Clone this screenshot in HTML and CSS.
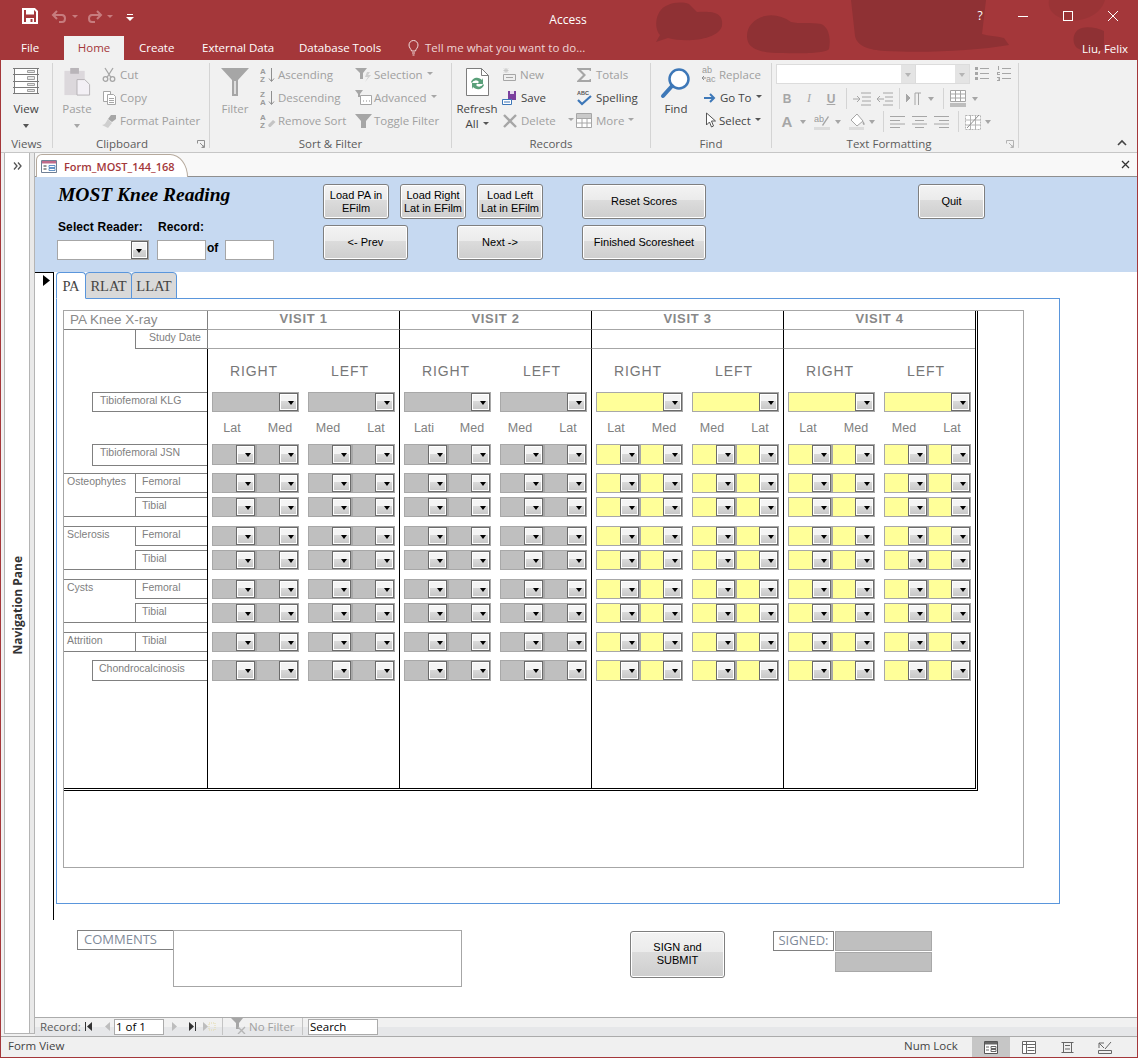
FILE: index.html
```html
<!DOCTYPE html>
<html lang="en">
<head>
<meta charset="utf-8">
<title>Access</title>
<link rel="stylesheet" href="styles.css">
</head>
<body>
<div class="app">
  <header class="chrome">
    <svg class="blobs" width="1138" height="60" viewBox="0 0 1138 60"><g fill="#8f3134"><path d="M668 5c-12 4-15 22-8 30l-4 7 12-4c18 5 50 2 54-12 2-14-10-15-25-14l-8-8c-6-2-14-2-21 1z"/><path d="M765 16c-14 3-22 16-16 28 6 8 20 9 34 9 20 1 44 0 46-4 2-10 0-22-8-25-10-2-22 0-30-2-8-6-18-8-26-6z"/><path d="M851 0l4 36c2 10 14 14 30 15 40 2 90 0 124-6l-5-7c-8-2-16-2-22-4l4-34z"/><path d="M1049 0c-2 10 6 18 20 20 16 2 32-6 36-20z" opacity=".45"/><path d="M1082 28c-9 2-11 14-5 20 8 5 20 4 27 1v-18c-6-3-16-5-22-3z"/></g></svg>
    <div class="titlebar">
      <div class="qat">
        <svg class="q-save" width="16" height="16" viewBox="0 0 16 16"><path d="M1 1h11.500L15 3.500V15H1z" fill="none" stroke="#fff" stroke-width="2"/><path d="M4 2h8v4.500H4zM4 10h8v5H4z" fill="#fff"/><path d="M8.500 11h2v3h-2z" fill="#a4373a"/></svg>
        <svg class="q-undo" width="36" height="16" viewBox="0 0 36 16"><path d="M6 3L2 7l4 4M2.500 7H11c4 0 4 7 0 7H8" fill="none" stroke="#c77c7e" stroke-width="2"/><path d="M21 7h6l-3 3z" fill="#c77c7e"/></svg>
        <svg class="q-redo" width="36" height="16" viewBox="0 0 36 16"><path d="M11 3l4 4-4 4M14.500 7H6c-4 0-4 7 0 7h3" fill="none" stroke="#c77c7e" stroke-width="2"/><path d="M21 7h6l-3 3z" fill="#c77c7e"/></svg>
        <svg class="q-more" width="8" height="8" viewBox="0 0 8 8"><path d="M1 1h6v1H1zM0 4h8L4 8z" fill="#fff"/></svg>
      </div>
      <div class="app-name">Access</div>
      <div class="winbtns">
        <span class="help">?</span>
        <svg width="12" height="12" viewBox="0 0 12 12"><path d="M1 6.500h10" stroke="#fff"/></svg>
        <svg width="12" height="12" viewBox="0 0 12 12"><rect x="1.500" y="1.500" width="9" height="9" fill="none" stroke="#fff"/></svg>
        <svg width="12" height="12" viewBox="0 0 12 12"><path d="M1 1l10 10M11 1L1 11" stroke="#fff"/></svg>
      </div>
    </div>
    <nav class="menutabs">
      <span class="mt mt-file">File</span>
      <span class="mt mt-home">Home</span>
      <span class="mt mt-create">Create</span>
      <span class="mt mt-ext">External Data</span>
      <span class="mt mt-db">Database Tools</span>
      <svg class="bulb" width="11" height="16" viewBox="0 0 11 16"><path d="M3.500 11C3 8.500 1 8 1 5a4.500 4.500 0 0 1 9 0c0 3-2 3.500-2.500 6zM4 13h3M4.500 15h2" fill="none" stroke="#f0dcdc"/></svg>
      <span class="tellme">Tell me what you want to do...</span>
      <span class="user">Liu, Felix</span>
    </nav>
  </header>

  <section class="ribbon">
    <div class="group g-views">
      <div class="gbody">
        <div class="big w50">
          <svg class="bicon" width="26" height="30" viewBox="0 0 26 30"><path d="M1.500 1.500h23v25h-23z" fill="#fff" stroke="#7a7a7a"/><path d="M0 1.500h26M0 7.500h26M0 14.500h26M0 20.500h26M0 26.500h26" stroke="#7a7a7a" fill="none"/><path d="M14.500 3.500h7v2h-7zM14.500 9.500h7v3h-7zM14.500 16.500h7v2h-7zM14.500 22.500h7v2h-7z" fill="#e8e8e8" stroke="#a0a0a0"/></svg>
          <span class="bl dark">View</span>
          <i class="darr dk"></i>
        </div>
      </div>
      <div class="glabel">Views</div>
    </div>

    <div class="group g-clip">
      <div class="gbody">
        <div class="big w32">
          <svg class="bicon" width="28" height="31" viewBox="0 0 28 31"><path d="M1 4h21v25H1z" fill="#dcd8dc"/><path d="M7 1h9v6H7z" fill="#b9b5b9"/><path d="M14 13h8l5 5v11H14z" fill="#f3f0f5" stroke="#b5b2b5"/></svg>
          <span class="bl">Paste</span>
          <i class="darr"></i>
        </div>
        <div class="smcol c-clip">
          <div class="si"><svg width="14" height="15" viewBox="0 0 14 15"><g fill="none" stroke="#a6a6a6" stroke-width="1.300"><circle cx="3.500" cy="12" r="2.300"/><circle cx="10.500" cy="12" r="2.300"/><path d="M3 1l6 9.500M11 1L5 10.500"/></g></svg><span>Cut</span></div>
          <div class="si"><svg width="15" height="15" viewBox="0 0 15 15"><g fill="#fff" stroke="#a6a6a6"><path d="M1.500 1.500h7v10h-7z"/><path d="M5.500 4.500h6l2 2v8h-8z"/></g><path d="M7 8.500h5M7 10.500h5M7 12.500h5" stroke="#a6a6a6"/></svg><span>Copy</span></div>
          <div class="si"><svg width="16" height="14" viewBox="0 0 16 14"><path d="M9 1l5 0v4L10 8 6 5z" fill="#a6a6a6"/><path d="M6 5l4 4-4 5-6-3c3 0 4-3 6-6z" fill="#cfcfcf"/></svg><span>Format Painter</span></div>
        </div>
      </div>
      <div class="glabel lp"><span>Clipboard</span><svg class="launch" width="8" height="8" viewBox="0 0 8 8"><path d="M.500 3.500v-3h7v7h-3M3 3l4 4M5 7h2V5" fill="none" stroke="#8f8f8f"/></svg></div>
    </div>

    <div class="group g-sort">
      <div class="gbody">
        <div class="big w50">
          <svg class="bicon" width="28" height="28" viewBox="0 0 28 28"><path d="M0 0h28L17 12v16h-6V12z" fill="#a6a6a6"/><path d="M13 13h2v13h-2z" fill="#dedede"/></svg>
          <span class="bl">Filter</span>
        </div>
        <div class="smcol c-sort1">
          <div class="si"><svg width="16" height="16" viewBox="0 0 16 16"><text class="az" x="0" y="7">A</text><text class="az" x="0" y="15">Z</text><path d="M11.500 1v13M9 11.500l2.500 3 2.500-3" fill="none" stroke="#8f8f8f"/></svg><span>Ascending</span></div>
          <div class="si"><svg width="16" height="16" viewBox="0 0 16 16"><text class="az" x="0" y="7">Z</text><text class="az" x="0" y="15">A</text><path d="M11.500 1v13M9 11.500l2.500 3 2.500-3" fill="none" stroke="#8f8f8f"/></svg><span>Descending</span></div>
          <div class="si"><svg width="16" height="16" viewBox="0 0 16 16"><text class="az" x="0" y="7">A</text><text class="az" x="0" y="15">Z</text><path d="M8 12l5-5 2.500 2-5 5H9z" fill="#c4c4c4"/></svg><span>Remove Sort</span></div>
        </div>
        <div class="smcol c-sort2">
          <div class="si"><svg width="17" height="16" viewBox="0 0 17 16"><path d="M0 1h12L8 6v6H5V6z" fill="#a6a6a6"/><path d="M12 5l-2 5h3l-3 5 6-7h-3l2-3z" fill="#cfcfcf"/></svg><span>Selection</span><i class="darr in"></i></div>
          <div class="si"><svg width="17" height="16" viewBox="0 0 17 16"><path d="M0 0h8L5 4v3H3V4z" fill="#a6a6a6"/><path d="M5.500 5.500h11v9h-11z" fill="#fff" stroke="#a6a6a6"/><path d="M8 11h1M11 11h1M14 11h1" stroke="#8f8f8f"/></svg><span>Advanced</span><i class="darr in"></i></div>
          <div class="si"><svg width="17" height="16" viewBox="0 0 17 16"><path d="M0 1h17l-6 7v7H6V8z" fill="#a6a6a6"/></svg><span>Toggle Filter</span></div>
        </div>
      </div>
      <div class="glabel">Sort &amp; Filter</div>
    </div>

    <div class="group g-rec">
      <div class="gbody">
        <div class="big w50">
          <svg class="bicon" width="25" height="30" viewBox="0 0 25 30"><path d="M1.500 1.500h15l7 7v20h-22z" fill="#fff" stroke="#7d7d7d"/><path d="M16.500 1.500v7h7" fill="none" stroke="#7d7d7d"/><path d="M6 15a6.500 6.500 0 0 1 11-2l1-2v6h-6l2-2a4 4 0 0 0-7 1z" fill="#5aa07a"/><path d="M19 18a6.500 6.500 0 0 1-11 2l-1 2v-6h6l-2 2a4 4 0 0 0 7-1z" fill="#5aa07a"/></svg>
          <span class="bl dark">Refresh</span>
          <span class="bl dark all">All<i class="darr in dk"></i></span>
        </div>
        <div class="smcol c-rec1">
          <div class="si"><svg width="15" height="15" viewBox="0 0 15 15"><path d="M1.500 7.500h12v6h-12z" fill="#efefef" stroke="#a6a6a6"/><path d="M4 10.500h7" stroke="#a6a6a6"/><path d="M4 1v5M1.500 3.500h5M2 1.500l4 4M6 1.500l-4 4" stroke="#c9c9c9"/></svg><span>New</span></div>
          <div class="si on"><svg width="16" height="16" viewBox="0 0 16 16"><path d="M6 1h8v9H6z" fill="#7b3f9e"/><path d="M8 1h4v3H8z" fill="#e6dcef"/><path d="M.500 9.500h9v5h-9z" fill="#fff" stroke="#3d77b8"/><path d="M2 12h6" stroke="#3d77b8"/></svg><span>Save</span></div>
          <div class="si"><svg width="16" height="16" viewBox="0 0 16 16"><path d="M2 2l12 12M14 2L2 14" stroke="#a6a6a6" stroke-width="2.400"/></svg><span>Delete</span><i class="darr in far"></i></div>
        </div>
        <div class="smcol c-rec2">
          <div class="si"><svg width="16" height="16" viewBox="0 0 16 16"><path d="M1 1h14v3h-1l-1-1H5l5 5-5 5h8l1-1h1v3H1v-1l6-6-6-6z" fill="#a6a6a6"/></svg><span>Totals</span></div>
          <div class="si on"><svg width="17" height="17" viewBox="0 0 17 17"><text class="abc" x="1" y="6">ABC</text><path d="M2 11l4 4 9-8" fill="none" stroke="#3d77b8" stroke-width="2.200"/></svg><span>Spelling</span></div>
          <div class="si"><svg width="16" height="15" viewBox="0 0 16 15"><path d="M.500.500h15v14H.500z" fill="#fff" stroke="#a6a6a6"/><path d="M0 5.500h16M0 10h16M6 5v10M11 5v10" stroke="#a6a6a6"/><path d="M1 1h14v4H1z" fill="#c9c9c9"/></svg><span>More</span><i class="darr in"></i></div>
        </div>
      </div>
      <div class="glabel">Records</div>
    </div>

    <div class="group g-find">
      <div class="gbody">
        <div class="big w50">
          <svg class="bicon" width="30" height="33" viewBox="0 0 30 33"><circle cx="18" cy="12" r="9.500" fill="#fff" stroke="#3e78b8" stroke-width="2.500"/><path d="M11 19L2 29" stroke="#3e78b8" stroke-width="4" stroke-linecap="round"/></svg>
          <span class="bl dark">Find</span>
        </div>
        <div class="smcol c-find">
          <div class="si"><svg width="17" height="17" viewBox="0 0 17 17"><text class="rep" x="1" y="7">ab</text><text class="rep" x="5" y="16">ac</text><path d="M1 12h4M1 12l2-2M1 12l2 2" stroke="#8f8f8f" fill="none"/></svg><span>Replace</span></div>
          <div class="si on"><svg width="15" height="12" viewBox="0 0 15 12"><path d="M2 6h10M8 2l4 4-4 4" fill="none" stroke="#3e78b8" stroke-width="2"/></svg><span>Go To</span><i class="darr in dk"></i></div>
          <div class="si on"><svg width="16" height="17" viewBox="0 0 16 17"><path d="M4.500 1v12l3-3 2 5 2-1-2-5h4z" fill="#fff" stroke="#555"/></svg><span>Select</span><i class="darr in dk"></i></div>
        </div>
      </div>
      <div class="glabel">Find</div>
    </div>

    <div class="group g-text">
      <div class="gbody tf">
        <div class="tfrow tf1">
          <div class="fbox fname"><i class="fdrop"></i></div>
          <div class="fbox fsize"><i class="fdrop"></i></div>
          <svg class="ti-b" width="16" height="16" viewBox="0 0 16 16"><path d="M6 3.500h9M6 8.500h9M6 13.500h9" stroke="#a6a6a6"/><path d="M1 2h3v3H1zM1 7h3v3H1zM1 12h3v3H1z" fill="#a6a6a6"/></svg>
          <svg class="ti-n" width="16" height="16" viewBox="0 0 16 16"><path d="M6 3.500h9M6 8.500h9M6 13.500h9" stroke="#a6a6a6"/><path d="M2 1h1v4H2zM1 7h3v1H2v1h2v1H1zM1 12h3v4H1v-1h2v-.500H2v-1h1V13H1z" fill="#a6a6a6"/></svg>
        </div>
        <div class="tfrow tf2">
          <span class="tg b">B</span><span class="tg i">I</span><span class="tg u">U</span><i class="sp sp1"></i>
          <svg class="m6" width="18" height="14" viewBox="0 0 18 14"><path d="M0 7h6M4 4l3 3-3 3M8 1h10M9 5h9M9 9h9M8 13h10" fill="none" stroke="#a6a6a6"/></svg>
          <svg class="m6" width="16" height="14" viewBox="0 0 16 14"><path d="M7 7H1M3 4L0 7l3 3M6 1h10M8 5h8M8 9h8M6 13h10" fill="none" stroke="#a6a6a6"/></svg>
          <i class="sp m6"></i>
          <svg class="m6" width="16" height="14" viewBox="0 0 16 14"><path d="M0 2l4 4-4 4zM9 1h6M12.500 1v12M9 1v12" stroke="#a6a6a6" fill="#a6a6a6"/></svg>
          <i class="darr cell18"></i><i class="sp m3"></i>
          <svg class="m6" width="16" height="17" viewBox="0 0 16 17"><path d="M.500.500h15v11H.500z" fill="#fff" stroke="#a6a6a6"/><path d="M0 4h16M0 8h16M5.500 0v12M10.500 0v12" stroke="#a6a6a6"/><path d="M0 13h16v4H0z" fill="#bdbdbd"/></svg>
          <i class="darr cell18"></i>
        </div>
        <div class="tfrow tf3">
          <span class="tg a">A</span><i class="darr cell10"></i>
          <svg class="m6" width="16" height="17" viewBox="0 0 16 17"><text class="rep" x="0" y="9">ab</text><path d="M8 12l6-9 1 1-6 9z" fill="#a6a6a6"/><path d="M0 14h16v3H0z" fill="#dcdcdc"/></svg>
          <i class="darr cell16"></i>
          <svg class="m2" width="18" height="17" viewBox="0 0 18 17"><path d="M3 7l6-6 6 7-6 5z" fill="#fff" stroke="#a6a6a6"/><path d="M15 8c2 2 2 4 1 4s-2-2-1-4z" fill="#a6a6a6"/><path d="M1 14h15v3H1z" fill="#dcdcdc"/></svg>
          <i class="darr cell12"></i><i class="sp m5"></i>
          <svg class="m6" width="15" height="12" viewBox="0 0 15 12"><path d="M0 .5h15M0 4.500h10M0 8h15M0 11.500h10" stroke="#a6a6a6"/></svg>
          <svg class="m7" width="15" height="12" viewBox="0 0 15 12"><path d="M0 .5h15M3 4.500h9M0 8h15M3 11.500h9" stroke="#a6a6a6"/></svg>
          <svg class="m7" width="15" height="12" viewBox="0 0 15 12"><path d="M0 .5h15M5 4.500h10M0 8h15M5 11.500h10" stroke="#a6a6a6"/></svg>
          <i class="sp m9"></i>
          <svg class="m6" width="16" height="17" viewBox="0 0 16 17"><path d="M.500 2.500h15v14H.500z" fill="#fff" stroke="#b5b5b5" stroke-dasharray="2 1"/><path d="M0 7h16M0 12h16M5.500 2v15M10.500 2v15" stroke="#b5b5b5"/><path d="M2 15L14 2" stroke="#8f8f8f"/></svg>
          <i class="darr cell14"></i>
        </div>
      </div>
      <div class="glabel lp"><span>Text Formatting</span><svg class="launch" width="8" height="8" viewBox="0 0 8 8"><path d="M.500 3.500v-3h7v7h-3M3 3l4 4M5 7h2V5" fill="none" stroke="#b3b3b3"/></svg></div>
    </div>
    <div class="ribbon-end">
      <svg width="10" height="7" viewBox="0 0 10 7"><path d="M1 6l4-4 4 4" fill="none" stroke="#444" stroke-width="1.600"/></svg>
    </div>
  </section>

  <div class="workspace">
    <aside class="navpane">
      <div class="nav-top"><svg width="9" height="8" viewBox="0 0 9 8"><path d="M1 .5l3 3.500-3 3.500M5 .5l3 3.500-3 3.500" fill="none" stroke="#555" stroke-width="1.300"/></svg></div>
      <div class="nav-label"><span>Navigation Pane</span></div>
    </aside>
    <div class="splitter"></div>

    <main class="doc">
      <div class="doctabs">
        <div class="dtab">
          <svg width="16" height="13" viewBox="0 0 16 13"><path d="M.500.500h15v12H.500z" fill="#fff" stroke="#6f7f95"/><path d="M1 1h14v2.500H1z" fill="#c06a8a"/><path d="M2.500 6h3M2.500 9h3" stroke="#333"/><path d="M8 5.500h6v2H8zM8 8.500h6v2H8z" fill="#fff" stroke="#3e78b8" stroke-width=".8"/></svg>
          <span>Form_MOST_144_168</span>
        </div>
        <svg class="doc-x" width="9" height="9" viewBox="0 0 9 9"><path d="M1 1l7 7M8 1L1 8" stroke="#333" stroke-width="1.300"/></svg>
      </div>

      <form class="form">
        <div class="fhead">
          <div class="fhead-left">
            <h1 class="ftitle">MOST Knee Reading</h1>
            <div class="flabels"><span class="fl1">Select Reader:</span><span>Record:</span></div>
            <div class="finputs">
              <div class="box b-reader"><i class="cb"></i></div>
              <div class="box b-rec"></div>
              <span class="of">of</span>
              <div class="box b-rec"></div>
            </div>
          </div>
          <div class="btnset b220">
            <div class="btnrow">
              <button type="button" class="btn w66">Load PA in<br>EFilm</button>
              <button type="button" class="btn w66">Load Right<br>Lat in EFilm</button>
              <button type="button" class="btn w66">Load Left<br>Lat in EFilm</button>
            </div>
            <div class="btnrow">
              <button type="button" class="btn w85">&lt;- Prev</button>
              <button type="button" class="btn w86">Next -&gt;</button>
            </div>
          </div>
          <div class="btnset b124">
            <button type="button" class="btn wfull">Reset Scores</button>
            <button type="button" class="btn wfull">Finished Scoresheet</button>
          </div>
          <div class="btnset bquit">
            <button type="button" class="btn wfull">Quit</button>
          </div>
        </div>

        <div class="detail">
          <div class="selector"><svg width="7" height="11" viewBox="0 0 7 11"><path d="M0 0l7 5.500L0 11z" fill="#000"/></svg></div>
          <div class="tabctl">
            <div class="tabstrip">
              <span class="tb tb-on">PA</span><span class="tb tb-r">RLAT</span><span class="tb tb-l">LLAT</span>
            </div>
            <div class="panel">
              <div class="outer">
                <div class="sheet">
                  <div class="row r-head">
                    <div class="lab l-title">PA Knee X-ray</div>
                    <div class="v vh first">VISIT 1</div><div class="v vh">VISIT 2</div><div class="v vh">VISIT 3</div><div class="v vh">VISIT 4</div>
                  </div>
                  <div class="row r-date">
                    <div class="lab l-date"><span>Study Date</span></div>
                    <div class="v vd first"></div><div class="v vd"></div><div class="v vd"></div><div class="v vd"></div>
                  </div>
                  <div class="row r-side">
                    <div class="lab"></div>
                    <div class="v side"><span>RIGHT</span><span>LEFT</span></div><div class="v side"><span>RIGHT</span><span>LEFT</span></div><div class="v side"><span>RIGHT</span><span>LEFT</span></div><div class="v side"><span>RIGHT</span><span>LEFT</span></div>
                  </div>
                  <div class="row r20">
                    <div class="lab l-wide"><span>Tibiofemoral KLG</span></div>
                    <div class="v g"><i class="c w"></i><i class="c w"></i></div><div class="v g"><i class="c w"></i><i class="c w"></i></div><div class="v y"><i class="c w"></i><i class="c w"></i></div><div class="v y"><i class="c w"></i><i class="c w"></i></div>
                  </div>
                  <div class="row r-sub">
                    <div class="lab"></div>
                    <div class="v sub"><span>Lat</span><span>Med</span><span>Med</span><span>Lat</span></div><div class="v sub"><span>Lati</span><span>Med</span><span>Med</span><span>Lat</span></div><div class="v sub"><span>Lat</span><span>Med</span><span>Med</span><span>Lat</span></div><div class="v sub"><span>Lat</span><span>Med</span><span>Med</span><span>Lat</span></div>
                  </div>
                  <div class="row r29 tall">
                    <div class="lab l-wide"><span>Tibiofemoral JSN</span></div>
                    <div class="v g"><i class="c"></i><i class="c"></i><i class="c"></i><i class="c"></i></div><div class="v g"><i class="c"></i><i class="c"></i><i class="c"></i><i class="c"></i></div><div class="v y"><i class="c"></i><i class="c"></i><i class="c"></i><i class="c"></i></div><div class="v y"><i class="c"></i><i class="c"></i><i class="c"></i><i class="c"></i></div>
                  </div>
                  <div class="row r24">
                    <div class="lab l-pair l-open"><span class="pn">Osteophytes</span><span class="pc">Femoral</span></div>
                    <div class="v g"><i class="c"></i><i class="c"></i><i class="c"></i><i class="c"></i></div><div class="v g"><i class="c"></i><i class="c"></i><i class="c"></i><i class="c"></i></div><div class="v y"><i class="c"></i><i class="c"></i><i class="c"></i><i class="c"></i></div><div class="v y"><i class="c"></i><i class="c"></i><i class="c"></i><i class="c"></i></div>
                  </div>
                  <div class="row r29">
                    <div class="lab l-pair l-close"><span class="pn"></span><span class="pc">Tibial</span></div>
                    <div class="v g"><i class="c"></i><i class="c"></i><i class="c"></i><i class="c"></i></div><div class="v g"><i class="c"></i><i class="c"></i><i class="c"></i><i class="c"></i></div><div class="v y"><i class="c"></i><i class="c"></i><i class="c"></i><i class="c"></i></div><div class="v y"><i class="c"></i><i class="c"></i><i class="c"></i><i class="c"></i></div>
                  </div>
                  <div class="row r24">
                    <div class="lab l-pair l-open"><span class="pn">Sclerosis</span><span class="pc">Femoral</span></div>
                    <div class="v g"><i class="c"></i><i class="c"></i><i class="c"></i><i class="c"></i></div><div class="v g"><i class="c"></i><i class="c"></i><i class="c"></i><i class="c"></i></div><div class="v y"><i class="c"></i><i class="c"></i><i class="c"></i><i class="c"></i></div><div class="v y"><i class="c"></i><i class="c"></i><i class="c"></i><i class="c"></i></div>
                  </div>
                  <div class="row r29">
                    <div class="lab l-pair l-close"><span class="pn"></span><span class="pc">Tibial</span></div>
                    <div class="v g"><i class="c"></i><i class="c"></i><i class="c"></i><i class="c"></i></div><div class="v g"><i class="c"></i><i class="c"></i><i class="c"></i><i class="c"></i></div><div class="v y"><i class="c"></i><i class="c"></i><i class="c"></i><i class="c"></i></div><div class="v y"><i class="c"></i><i class="c"></i><i class="c"></i><i class="c"></i></div>
                  </div>
                  <div class="row r24">
                    <div class="lab l-pair l-open"><span class="pn">Cysts</span><span class="pc">Femoral</span></div>
                    <div class="v g"><i class="c"></i><i class="c"></i><i class="c"></i><i class="c"></i></div><div class="v g"><i class="c"></i><i class="c"></i><i class="c"></i><i class="c"></i></div><div class="v y"><i class="c"></i><i class="c"></i><i class="c"></i><i class="c"></i></div><div class="v y"><i class="c"></i><i class="c"></i><i class="c"></i><i class="c"></i></div>
                  </div>
                  <div class="row r29">
                    <div class="lab l-pair l-close"><span class="pn"></span><span class="pc">Tibial</span></div>
                    <div class="v g"><i class="c"></i><i class="c"></i><i class="c"></i><i class="c"></i></div><div class="v g"><i class="c"></i><i class="c"></i><i class="c"></i><i class="c"></i></div><div class="v y"><i class="c"></i><i class="c"></i><i class="c"></i><i class="c"></i></div><div class="v y"><i class="c"></i><i class="c"></i><i class="c"></i><i class="c"></i></div>
                  </div>
                  <div class="row r28">
                    <div class="lab l-pair l-open l-close"><span class="pn">Attrition</span><span class="pc">Tibial</span></div>
                    <div class="v g"><i class="c"></i><i class="c"></i><i class="c"></i><i class="c"></i></div><div class="v g"><i class="c"></i><i class="c"></i><i class="c"></i><i class="c"></i></div><div class="v y"><i class="c"></i><i class="c"></i><i class="c"></i><i class="c"></i></div><div class="v y"><i class="c"></i><i class="c"></i><i class="c"></i><i class="c"></i></div>
                  </div>
                  <div class="row r-last tall">
                    <div class="lab l-wide l-chon"><span>Chondrocalcinosis</span></div>
                    <div class="v g"><i class="c"></i><i class="c"></i><i class="c"></i><i class="c"></i></div><div class="v g"><i class="c"></i><i class="c"></i><i class="c"></i><i class="c"></i></div><div class="v y"><i class="c"></i><i class="c"></i><i class="c"></i><i class="c"></i></div><div class="v y"><i class="c"></i><i class="c"></i><i class="c"></i><i class="c"></i></div>
                  </div>
                </div>
              </div>
            </div>
          </div>
        </div>

        <div class="ffoot">
          <div class="comments"><span class="caption c-comments">COMMENTS</span><div class="memo"></div></div>
          <button type="button" class="btn sign">SIGN and<br>SUBMIT</button>
          <div class="signed">
            <span class="caption c-signed">SIGNED:</span>
            <div class="sigboxes"><div class="sigbox"></div><div class="sigbox"></div></div>
          </div>
        </div>
      </form>

      <div class="recbar">
        <span class="rb-lab">Record:</span>
        <svg class="rb1" width="8" height="9" viewBox="0 0 8 9"><path d="M0 0h1v9H0zM7 0v9L2 4.500z" fill="#333"/></svg>
        <svg class="rb2" width="6" height="9" viewBox="0 0 6 9"><path d="M5 0v9L0 4.500z" fill="#bdbdbd"/></svg>
        <div class="rb-input">1 of 1</div>
        <svg class="rb3" width="6" height="9" viewBox="0 0 6 9"><path d="M0 0v9l5-4.500z" fill="#bdbdbd"/></svg>
        <svg class="rb4" width="8" height="9" viewBox="0 0 8 9"><path d="M0 0v9l5-4.500zM6 0h1v9H6z" fill="#333"/></svg>
        <svg class="rb5" width="13" height="9" viewBox="0 0 13 9"><path d="M0 0v9l5-4.500z" fill="#bdbdbd"/><path d="M6 1h6v7H6z" fill="none" stroke="#e3d9a8" stroke-dasharray="1 1"/></svg>
        <i class="rb-sep rb-s1"></i>
        <svg class="rb-filter" width="16" height="16" viewBox="0 0 16 16"><path d="M0 0h12L8 5v6H5V5z" fill="#a6a6a6"/><path d="M7 9l7 7M14 9l-7 7" stroke="#b5b5b5" stroke-width="1.400"/></svg>
        <span class="rb-nof">No Filter</span>
        <i class="rb-sep rb-s2"></i>
        <div class="rb-search">Search</div>
      </div>
    </main>
  </div>

  <footer class="status">
    <span class="st-left">Form View</span>
    <span class="st-num">Num Lock</span>
    <div class="views">
      <span class="vw vw-on"><svg width="14" height="13" viewBox="0 0 14 13"><path d="M.500.500h13v12H.500z" fill="#fff" stroke="#555"/><path d="M1 1h12v2.500H1z" fill="#666"/><path d="M2 6h3M2 9h3M7 5.500h5v2H7zM7 8.500h5v2H7z" stroke="#666" fill="none"/></svg></span>
      <span class="vw"><svg width="14" height="13" viewBox="0 0 14 13"><path d="M.500.500h13v12H.500zM.5 3.500h13M4.500 1v12M5.500 6.500h7M5.500 9.500h7" fill="#fff" stroke="#666"/></svg></span>
      <span class="vw"><svg width="13" height="13" viewBox="0 0 13 13"><path d="M.5 1.500h12M.5 11.500h12M2.500 1.500v10h8v-10M4 4.500h5M4 8h5" fill="none" stroke="#666"/></svg></span>
      <span class="vw"><svg width="14" height="13" viewBox="0 0 14 13"><path d="M.5 9.500h13v3H.5zM1 2l5 5M1 7V2h5M7 8l6-7" fill="none" stroke="#666"/></svg></span>
    </div>
  </footer>
</div>
</body>
</html>
```

FILE: styles.css
```css
* { box-sizing: border-box; }
html, body { margin: 0; height: 100%; overflow: hidden; }
body { font-family: "Open Sans", "Noto Sans", sans-serif; font-size: 11.5px; color: #444; background: #fff; }

.app { width: 1138px; height: 1058px; display: flex; flex-direction: column; border: 1px solid #a4373a; border-top: 0; }

/* ---------- title bar and menu tabs ---------- */
.chrome { position: relative; height: 60px; margin: 0 -1px; background: #a4373a; flex: none; color: #fff; }
.blobs { position: absolute; left: 0; top: 0; }
.titlebar { position: relative; height: 36px; display: flex; }
.qat { display: flex; align-items: flex-start; padding: 8px 0 0 22px; width: 540px; }
.q-undo { margin-left: 13px; }
.q-redo { margin-left: -1px; }
.q-more { margin: 5px 0 0 4px; }
.app-name { width: 56px; text-align: center; font-size: 12px; padding-top: 11px; }
.winbtns { display: flex; align-items: flex-start; margin-left: 378px; padding-top: 10px; }
.help { width: 12px; font-size: 12px; line-height: 14px; text-align: center; margin-top: -1px; }
.winbtns svg { margin-left: 33px; }
.winbtns svg:nth-child(2) { margin-left: 31px; }

.menutabs { position: relative; height: 24px; display: flex; align-items: center; font-size: 11.5px; }
.mt { line-height: 24px; white-space: nowrap; }
.mt-file { margin-left: 21px; width: 43px; }
.mt-home { width: 60px; height: 24px; background: #f1f1f1; color: #a4373a; text-align: center; }
.mt-create { margin-left: 15px; width: 63px; }
.mt-ext { width: 97px; }
.mt-db { width: 109px; }
.bulb { margin-right: 6px; }
.tellme { width: 657px; color: #eed5d5; margin-top: -1px; }
.user { white-space: nowrap; }

/* ---------- ribbon ---------- */
.ribbon { height: 93px; flex: none; display: flex; background: #f1f1f1; border-bottom: 1px solid #c6c6c6; padding: 3px 0 0; color: #a0a0a0; }
.group { display: flex; flex-direction: column; height: 85px; border-right: 1px solid #d4d4d4; }
.gbody { display: flex; height: 75px; flex: none; }
.glabel { height: 12px; line-height: 12px; flex: none; text-align: center; color: #5c5c5c; font-size: 11.5px; }
.glabel.lp { display: flex; align-items: center; }
.glabel.lp span { flex: 1; }
.launch { margin-right: 4px; }
.g-views { width: 52px; }
.g-clip { width: 157px; }
.g-clip .lp span { margin-right: 6px; }
.g-sort { width: 242px; }
.g-rec { width: 199px; }
.g-find { width: 121px; }
.g-text { width: 247px; }
.ribbon-end { flex: 1; display: flex; align-items: flex-end; justify-content: flex-end; padding: 0 10px 6px 0; }

.big { display: flex; flex-direction: column; align-items: center; height: 73px; }
.w50 { width: 50px; }
.w32 { width: 32px; margin-left: 8px; }
.bicon { height: 38px; padding-top: 4px; flex: none; overflow: visible; }
.g-views .bicon, .g-clip .bicon, .g-sort .bicon, .g-rec .bicon { height: 34px; }
.g-find .bicon { height: 37px; }
.bl { line-height: 15px; white-space: nowrap; margin-top: 4px; }
.g-find .bl { margin-top: 1px; }
.bl.all { margin-top: 0; }
.dark { color: #444; }
.darr { display: block; width: 0; height: 0; margin: 8px auto 0; border: 3px solid transparent; border-top: 4px solid #a6a6a6; border-bottom: 0; }
.darr.dk { border-top-color: #555; }
.darr.in { display: inline-block; margin: 0 0 2px 4px; border-width: 3px 3px 0; vertical-align: middle; flex: none; }
.darr.far { margin-left: 12px; }
.tf .darr { margin-top: 0; flex: none; }
.tf .cell18 { margin-left: 6px; margin-right: 6px; }
.tf .cell10 { margin-left: 2px; margin-right: 2px; }
.tf .cell16 { margin-left: 5px; margin-right: 5px; }
.tf .cell12 { margin-left: 3px; margin-right: 3px; }
.tf .cell14 { margin-left: 4px; margin-right: 4px; }

.smcol { display: flex; flex-direction: column; }
.si { height: 23px; display: flex; align-items: center; white-space: nowrap; }
.si > svg { flex: none; }
.si.on { color: #444; }
.c-clip { margin-left: 9px; }
.c-clip .si > svg { margin-right: 4px; }
.c-clip .si:nth-child(2) > svg { margin-right: 3px; }
.c-clip .si:nth-child(3) > svg { margin-right: 2px; }
.c-sort1 { width: 95px; }
.c-sort1 .si > svg { margin-right: 2px; }
.c-sort2 .si > svg { margin-right: 2px; }
.c-rec1 { width: 74px; }
.c-rec1 .si > svg { margin-right: 3px; }
.c-rec2 .si > svg { margin-right: 4px; }
.c-rec2 .si:nth-child(2) > svg { margin-right: 3px; }
.c-find .si > svg { margin-right: 1px; }
.c-find .si:nth-child(2) > svg { margin-right: 3px; margin-left: 1px; }
.c-find .si:nth-child(3) > svg { margin-right: 1px; margin-left: 1px; }

.az { font: 700 8px "Liberation Sans", sans-serif; fill: #9a9a9a; }
.abc { font: 700 5.500px "Liberation Sans", sans-serif; fill: #555; }
.rep { font: 9px "Liberation Sans", sans-serif; fill: #9a9a9a; }

.tf { display: block; padding-left: 4px; }
.tfrow { display: flex; align-items: center; height: 23px; }
.tf1 { align-items: flex-start; height: 24px; padding-top: 1px; }
.fbox { background: #fff; border: 1px solid #dcdcdc; height: 20px; display: flex; justify-content: flex-end; }
.fname { width: 139px; border-right: 0; }
.fsize { width: 55px; }
.fdrop { display: block; width: 14px; background: #e4e4e4; position: relative; }
.fdrop::after { content: ""; position: absolute; left: 4px; top: 8px; border: 3px solid transparent; border-top: 4px solid #b5b5b5; border-bottom: 0; }
.ti-b { margin-left: 4px; margin-top: 1px; }
.ti-n { margin-left: 6px; margin-top: 1px; }
.tg { width: 22px; text-align: center; flex: none; font: 700 12px "Liberation Sans", sans-serif; color: #a6a6a6; }
.tg.i { font: italic 12px "Liberation Serif", serif; }
.tg.u { text-decoration: underline; }
.tg.a { font-size: 15px; }
.sp { display: block; width: 1px; height: 21px; background: #d4d4d4; flex: none; }
.sp1 { margin-left: 4px; }
.m2 { margin-left: 2px; }
.m3 { margin-left: 3px; }
.m5 { margin-left: 5px; }
.m6 { margin-left: 6px; }
.m7 { margin-left: 7px; }
.m9 { margin-left: 9px; }
.tf svg { flex: none; }

/* ---------- workspace ---------- */
.workspace { flex: 1; display: flex; min-height: 0; background: #f1f1f1; }
.navpane { width: 25px; margin: 0 0 2px 3px; display: flex; flex-direction: column; background: #fff; border-left: 1px solid #b4b4b4; border-bottom: 1px solid #b4b4b4; }
.nav-top { height: 24px; display: flex; align-items: flex-start; justify-content: center; padding: 9px 0 0; }
.nav-label { flex: 1; display: flex; align-items: center; justify-content: center; }
.nav-label span { writing-mode: vertical-rl; transform: rotate(180deg); font-weight: 700; font-size: 12px; color: #333; white-space: nowrap; }
.splitter { width: 6px; margin-bottom: 2px; background: #e9e9e9; border: solid #b4b4b4; border-width: 0 1px 1px; }

.doc { flex: 1; min-width: 0; display: flex; flex-direction: column; }
.doctabs { height: 24px; flex: none; display: flex; align-items: flex-end; justify-content: space-between; background: #f8f8f8; border-bottom: 1px solid #8f8f8f; padding-left: 1px; }
.dtab { width: 152px; height: 23px; margin-bottom: -1px; display: flex; align-items: center; gap: 7px; padding-left: 4px; background: #fff; border: 1px solid #b5a99c; border-bottom: 0; border-radius: 6px 18px 0 0 / 6px 23px 0 0; color: #a4373a; font-weight: 600; font-size: 11px; white-space: nowrap; }
.doc-x { margin: 0 7px 7px 0; }

.form { flex: 1; min-height: 0; display: flex; flex-direction: column; background: #fff; font-family: "Liberation Sans", Arial, sans-serif; }
.fhead { height: 95px; flex: none; display: flex; padding-top: 7px; background: #c6d9f1; }
.fhead-left { width: 288px; padding-left: 23px; color: #000; }
.ftitle { margin: 0; font: italic 700 19.500px/22px "Liberation Serif", serif; color: #000; }
.flabels { display: flex; margin-top: 14px; font-weight: 700; font-size: 12px; letter-spacing: .1px; line-height: 14px; }
.fl1 { width: 100px; }
.finputs { display: flex; margin: 6px 0 0 -1px; align-items: flex-start; }
.box { height: 20px; background: #fff; border: 1px solid #a6a6a6; position: relative; }
.b-reader { width: 92px; margin-right: 8px; }
.b-rec { width: 49px; }
.of { width: 19px; font-weight: 700; font-size: 12px; line-height: 16px; padding-left: 1px; }
.cb { position: absolute; right: 0; top: 0; width: 17px; height: 18px; background: linear-gradient(#f2f2f2 50%, #d6d6d6 50%, #c8c8c8); border: 1px solid #666; box-shadow: inset 0 0 0 1px #fff; }
.cb::after { content: ""; position: absolute; left: 4px; top: 7px; border: 3.500px solid transparent; border-top: 4px solid #000; border-bottom: 0; }

.btnset { display: flex; flex-direction: column; gap: 6px; }
.b220 { width: 220px; }
.b124 { width: 124px; margin-left: 39px; }
.bquit { width: 67px; margin-left: 212px; }
.btnrow { display: flex; justify-content: space-between; }
.btn { height: 35px; padding: 0; font: 11px/13px "Liberation Sans", Arial, sans-serif; color: #000; white-space: nowrap; border: 1px solid #7f7f7f; border-radius: 3px; background: linear-gradient(#f3f3f3, #ebebeb 45%, #dcdcdc 45%, #cecece); box-shadow: inset 0 0 0 1px #fff; }
.w66 { width: 66px; }
.w85 { width: 85px; }
.w86 { width: 86px; }
.wfull { width: 100%; }

.detail { height: 648px; flex: none; display: flex; align-items: flex-start; }
.selector { width: 19px; height: 648px; flex: none; border-top: 1px solid #000; border-right: 1px solid #000; padding: 2px 0 0 8px; }
.selector svg { display: block; }
.tabctl { width: 1004px; margin-left: 2px; }
.tabstrip { height: 27px; display: flex; align-items: flex-end; position: relative; }
.tb { display: block; height: 27px; border: 1px solid #5a96dc; border-radius: 4px 4px 0 0; margin-right: -1px; background: #d9d9d9; text-align: center; font: 14.500px/26px "Liberation Serif", serif; color: #444; }
.tb-on { width: 30px; background: #fff; border-bottom-color: #fff; position: relative; z-index: 1; }
.tb-r { width: 47px; }
.tb-l { width: 46px; }
.panel { height: 606px; margin-top: -1px; border: 1px solid #5a96dc; padding: 11px 0 0 6px; }
.outer { width: 961px; height: 558px; border: 1px solid #a6a6a6; }

.sheet { width: 914px; border-right: 3px double #000; border-bottom: 3px double #000; }
.row { display: grid; grid-template-columns: 143px repeat(4, 192px); align-items: stretch; }
.r-head { height: 19px; }
.r-date { height: 19px; }
.r-side { height: 43px; }
.r20 { height: 20px; }
.r-sub { height: 32px; }
.r29 { height: 29px; }
.r24 { height: 24px; }
.r28 { height: 28px; }
.r-last { height: 128px; }

.v { display: flex; align-items: flex-start; padding-left: 4px; border-left: 1px solid #000; min-width: 0; }
.vh { justify-content: center; padding: 0; border-bottom: 1px solid #a6a6a6; font-weight: 700; font-size: 13px; letter-spacing: .7px; line-height: 15px; color: #888; }
.vd { border-bottom: 1px solid #a6a6a6; }
.first { border-left-color: #808080; }
.side { padding: 15px 0 0; color: #777; font-size: 14px; line-height: 14px; letter-spacing: .9px; }
.side span { width: 92px; text-align: center; flex: none; }
.side span + span { width: 100px; }
.sub { padding: 9px 0 0; color: #808080; font-size: 12.500px; line-height: 14px; }
.sub span { width: 48px; text-align: center; flex: none; }

.c { display: block; flex: none; position: relative; width: 44px; height: 20px; background: #bfbfbf; border: 1px solid #a8a8a8; }
.tall .c { height: 21px; }
.c:nth-child(even) { width: 43px; }
.c:nth-child(2) { margin-right: 9px; }
.c.w, .c.w:nth-child(even) { width: 87px; margin-right: 9px; }
.y .c { background: #ffff99; }
.c::before { content: ""; position: absolute; right: 0; top: 0; bottom: 0; width: 17px; background: linear-gradient(#f4f4f4 45%, #dadada 45%, #c6c6c6); border: 1px solid #6b6b6b; box-shadow: inset 0 0 0 1px #fff; }
.c::after { content: ""; position: absolute; right: 4px; top: 8px; border: 3.500px solid transparent; border-top: 4px solid #000; border-bottom: 0; }

.lab { color: #808080; font-size: 10.500px; line-height: 13px; white-space: nowrap; }
.lab span { display: block; }
.l-title { font-size: 13.500px; line-height: 17px; padding-left: 6px; color: #8a8a8a; border-bottom: 1px solid #808080; }
.l-date { padding-left: 71px; }
.l-date span { height: 19px; border: solid #808080; border-width: 0 0 1px 1px; padding: 1px 0 0 13px; }
.l-wide { padding-left: 28px; }
.l-wide span { height: 20px; border: solid #808080; border-width: 1px 0 1px 1px; padding: 1px 0 0 7px; }
.r29.tall .l-wide span { height: 22px; }
.l-chon span { padding-left: 6px; height: 21px; }
.l-pair { display: grid; grid-template-columns: 71px 72px; align-items: start; }
.l-pair .pn { height: 20px; padding: 1px 0 0 3px; }
.l-pair .pc { height: 20px; border: solid #808080; border-width: 1px 0 1px 1px; padding: 1px 0 0 6px; }
.l-open .pn { border-top: 1px solid #808080; }
.l-close .pn { border-bottom: 1px solid #808080; }

/* ---------- form footer ---------- */
.ffoot { flex: 1; display: flex; align-items: flex-start; padding-top: 10px; }
.comments { display: flex; align-items: flex-start; margin-left: 42px; }
.caption { display: block; height: 20px; border: 1px solid #808080; color: #7f8a99; font-family: "Open Sans", sans-serif; font-size: 13px; line-height: 17px; white-space: nowrap; }
.c-comments { width: 97px; padding-left: 6px; margin-right: -1px; }
.memo { width: 289px; height: 57px; border: 1px solid #a6a6a6; }
.sign { width: 95px; height: 47px; margin: 1px 0 0 168px; padding-bottom: 2px; }
.signed { display: flex; align-items: flex-start; margin: 1px 0 0 48px; }
.c-signed { width: 61px; text-align: center; }
.sigboxes { display: flex; flex-direction: column; margin-left: 1px; }
.sigbox { width: 97px; height: 20px; background: #bfbfbf; border: 1px solid #a8a8a8; }
.sigbox + .sigbox { margin-top: 1px; }

/* ---------- record navigation ---------- */
.recbar { height: 19px; flex: none; display: flex; align-items: center; padding-bottom: 2px; background: linear-gradient(#f1f1f1 50%, #e6e7e9 50%); border-top: 1px solid #ababab; font-size: 11.5px; color: #5c5c5c; white-space: nowrap; }
.rb-lab { margin-left: 5px; width: 45px; }
.rb2 { margin-left: 12px; }
.rb-input, .rb-search { height: 16px; background: #fff; border: 1px solid #ababab; color: #000; line-height: 14px; padding-left: 1px; margin-top: 1px; }
.rb-input { width: 50px; margin-left: 3px; }
.rb3 { margin-left: 8px; }
.rb4 { margin-left: 11px; }
.rb5 { margin-left: 6px; }
.rb-sep { display: block; width: 1px; height: 17px; margin-top: 1px; background: #c4c4c4; }
.rb-s1 { margin-left: 6px; }
.rb-filter { margin-left: 8px; }
.rb-nof { color: #a0a0a0; width: 53px; margin-left: 2px; }
.rb-search { width: 70px; margin-left: 5px; }

/* ---------- status bar ---------- */
.status { height: 21px; flex: none; display: flex; align-items: center; background: #f0f0f0; border-top: 1px solid #ababab; color: #444; font-size: 11.5px; line-height: 16px; }
.st-left { margin-left: 7px; width: 896px; margin-top: -3px; }
.st-num { width: 68px; margin-top: -3px; }
.views { display: flex; align-items: stretch; height: 20px; }
.vw { width: 38px; display: flex; align-items: center; justify-content: center; }
.vw-on { background: #c6c6c6; }
```
